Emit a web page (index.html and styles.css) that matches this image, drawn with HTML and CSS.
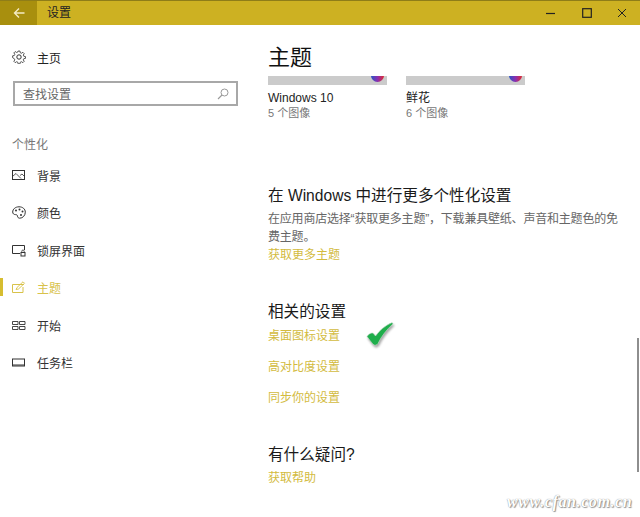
FILE: index.html
```html
<!DOCTYPE html>
<html lang="zh-CN">
<head>
<meta charset="utf-8">
<title>设置</title>
<link rel="stylesheet" href="styles.css">
</head>
<body>
<div class="window">
  <header class="titlebar">
    <div class="back">
      <svg width="12" height="12" viewBox="0 0 12 12"><path d="M6 1.500 1.500 6 6 10.500M1.500 6H11.500" fill="none" stroke="#f4ecc4" stroke-width="1.400"/></svg>
    </div>
    <div class="app-title">设置</div>
    <div class="controls">
      <svg width="10" height="10" viewBox="0 0 10 10"><path d="M0 5.500H9" stroke="#222" stroke-width="1.200"/></svg>
      <svg width="10" height="10" viewBox="0 0 10 10"><rect x=".7" y=".7" width="8.600" height="8.600" fill="none" stroke="#222" stroke-width="1.200"/></svg>
      <svg width="10" height="10" viewBox="0 0 10 10"><path d="M1 1 9 9M9 1 1 9" stroke="#222" stroke-width="1"/></svg>
    </div>
  </header>
  <div class="content">
    <nav class="sidebar">
      <div class="home">
        <svg width="14" height="14" viewBox="0 0 14 14"><circle cx="7" cy="7" r="2.200" fill="none" stroke="#333"/><path d="M6 .8h2l.3 1.800 1.300.6 1.600-1 1.400 1.400-1 1.600.6 1.300 1.800.3v2l-1.800.3-.6 1.300 1 1.600-1.400 1.400-1.600-1-1.300.6-.3 1.800H6l-.3-1.800-1.300-.6-1.600 1-1.400-1.400 1-1.600-.6-1.300L0 8V6l1.800-.3.6-1.300-1-1.600 1.400-1.400 1.600 1 1.300-.6z" fill="none" stroke="#333" stroke-width=".9" transform="translate(.6 .3) scale(.92)"/></svg>
        <span>主页</span>
      </div>
      <div class="search">
        <span>查找设置</span>
        <svg width="12" height="12" viewBox="0 0 12 12"><circle cx="7.500" cy="4.500" r="3.500" fill="none" stroke="#999"/><path d="M5 7 1 11" stroke="#999" stroke-width="1.100"/></svg>
      </div>
      <div class="group">个性化</div>
      <ul class="menu">
        <li class="item">
          <svg width="14" height="12" viewBox="0 0 14 12"><rect x=".5" y="1.500" width="12" height="9" fill="none" stroke="#333"/><path d="M1 7 4 4.500 9 9.500M8 6.500 10 5l2.500 2.500" fill="none" stroke="#333" stroke-width=".8"/></svg>
          <span>背景</span>
        </li>
        <li class="item">
          <svg width="14" height="13" viewBox="0 0 14 13"><path d="M7 .8C3.300.8.700 3.200.700 6c0 1.800 1.300 2.600 2.800 2.600 1.300 0 2 .6 2 1.600 0 1.200 1 2 2.200 2 3 0 5.600-2.700 5.600-6C13.300 3 10.700.8 7 .8z" fill="none" stroke="#333"/><circle cx="4" cy="4.500" r="1" fill="#333"/><circle cx="7.500" cy="3.500" r="1" fill="#333"/><circle cx="10.500" cy="5.500" r="1" fill="#333"/><circle cx="9" cy="9" r="1" fill="#333"/></svg>
          <span>颜色</span>
        </li>
        <li class="item">
          <svg width="14" height="13" viewBox="0 0 14 13"><path d="M8 9.500H.5v-8h12V6" fill="none" stroke="#333"/><rect x="9" y="8.500" width="4" height="3.500" fill="none" stroke="#333"/><path d="M9.800 8.500V7.200a1.200 1.200 0 0 1 2.400 0v1.300" fill="none" stroke="#333" stroke-width=".8"/></svg>
          <span>锁屏界面</span>
        </li>
        <li class="item active">
          <svg width="14" height="13" viewBox="0 0 14 13"><path d="M12 3.500H.5v8h10.500V6" fill="none" stroke="#d8c24a"/><path d="M4 8.500 5 6.500 11 .8l1.500 1.500-6 5.700z" fill="none" stroke="#d8c24a" stroke-width=".9"/></svg>
          <span>主题</span>
        </li>
        <li class="item">
          <svg width="14" height="11" viewBox="0 0 14 11"><path d="M.5 1.500h5.500v3H.5zM.5 6.500h5.500v3H.5zM7.500 1.500H13v3H7.500zM7.500 6.500H13v3H7.500z" fill="none" stroke="#333" stroke-width=".9"/></svg>
          <span>开始</span>
        </li>
        <li class="item">
          <svg width="14" height="10" viewBox="0 0 14 10"><rect x=".5" y="1" width="12" height="7" fill="none" stroke="#333"/><path d="M.5 7h12" stroke="#333"/></svg>
          <span>任务栏</span>
        </li>
      </ul>
    </nav>
    <main class="main">
      <h1 class="page-title">主题</h1>
      <div class="themes">
        <div class="theme">
          <div class="swatch"><i class="dot"></i></div>
          <div class="theme-name">Windows 10</div>
          <div class="theme-count">5 个图像</div>
        </div>
        <div class="theme">
          <div class="swatch"><i class="dot"></i></div>
          <div class="theme-name">鲜花</div>
          <div class="theme-count">6 个图像</div>
        </div>
      </div>
      <section class="more">
        <h2 class="heading">在 Windows 中进行更多个性化设置</h2>
        <p class="desc">在应用商店选择“获取更多主题”，下载兼具壁纸、声音和主题色的免费主题。</p>
        <a class="link">获取更多主题</a>
      </section>
      <section class="related">
        <h2 class="heading">相关的设置</h2>
        <div class="links">
          <a class="link">桌面图标设置</a>
          <a class="link">高对比度设置</a>
          <a class="link">同步你的设置</a>
        </div>
      </section>
      <section class="question">
        <h2 class="heading">有什么疑问?</h2>
        <a class="link">获取帮助</a>
      </section>
    </main>
  </div>
  <svg class="check" width="28" height="25" viewBox="0 0 28 25"><path d="M1 14.500C2.500 12 5 10.500 7 11l2.500 3C13.500 8.500 19 3.500 25.500.8c1.200-.5 1.800.6 1.100 1.400C20.500 8 15.500 14 12 21.500c-.8 1.800-3.500 2.300-5 .8C5 20 3 17 1 14.500z" fill="#1fae4b" stroke="#cfdcd2" stroke-width=".6"/></svg>
  <div class="scrollbar"></div>
  <div class="watermark">www.cfan.com.cn</div>
</div>
</body>
</html>
```

FILE: styles.css
```css
* { box-sizing: border-box; }
html, body { margin: 0; padding: 0; background: #fff; }
body { font-family: "Liberation Sans", "Noto Sans CJK SC", sans-serif; color: #222; }
.window { position: relative; width: 640px; height: 517px; overflow: hidden; background: #fff; }

.titlebar { display: flex; align-items: center; height: 25px; background: #cdb122; border-top: 1px solid #8f7d18; }
.back { display: flex; align-items: center; justify-content: center; width: 37px; height: 100%; background: #a88f0e; }
.app-title { margin-left: 10px; font-size: 12px; line-height: 26px; color: #222; }
.controls { display: flex; margin-left: auto; gap: 25.500px; padding-right: 13px; align-items: center; }
.controls svg { display: block; width: 10px; }

.content { display: flex; height: 492px; }
.sidebar { width: 268px; flex: none; padding-top: 23px; }
.home { display: flex; align-items: center; gap: 11px; padding-left: 12px; height: 18px; font-size: 12px; color: #222; }
.search { display: flex; align-items: center; justify-content: space-between; width: 225px; height: 25px; margin: 15px 0 0 13px; padding: 0 7px 0 8px; border: 2px solid #a8a8a8; font-size: 12px; color: #666; }
.group { margin: 29px 0 0 12px; font-size: 12px; line-height: 20px; color: #777; }
.menu { list-style: none; margin: 1.500px 0 0; padding: 0; }
.item { position: relative; display: flex; align-items: center; height: 37.500px; padding-left: 12px; font-size: 12px; color: #333; }
.item svg { width: 14px; margin-right: 11px; flex: none; }
.item.active { color: #d8c24a; }
.item.active::before { content: ""; position: absolute; left: 0; top: 9px; width: 3px; height: 18px; background: #d6bd30; }

.main { flex: 1; min-width: 0; padding-right: 20px; }
.page-title { margin: 18px 0 0; font-size: 22px; line-height: 30px; font-weight: 400; color: #111; }
.themes { display: flex; gap: 19px; margin-top: 3px; }
.theme { width: 119px; }
.swatch { position: relative; height: 9px; background: #cbcbcb; overflow: hidden; }
.dot { position: absolute; right: 3px; top: -7px; width: 13px; height: 13px; border-radius: 50%; background: linear-gradient(90deg, #2a55c5 0%, #8a2fb0 50%, #e02a30 100%); }
.theme-name { margin-top: 4px; font-size: 12px; line-height: 18px; color: #222; }
.theme-count { font-size: 11px; line-height: 13px; color: #777; }

.heading { margin: 0; font-size: 15.600px; line-height: 24px; font-weight: 400; color: #1a1a1a; }
.more { margin-top: 64px; }
.desc { width: 352px; margin: 2px 0 0; font-size: 12px; line-height: 18px; letter-spacing: -.2px; color: #666; }
.link { display: block; font-size: 12px; line-height: 18px; color: #d3bb3e; }
.related { margin-top: 36px; }
.links { display: flex; flex-direction: column; gap: 13px; margin-top: 3px; }
.question { margin-top: 36px; }
.question .link { margin-top: 2px; }

.check { position: absolute; left: 366px; top: 322px; filter: drop-shadow(1px 2px 1px rgba(60,60,60,.45)); }
.scrollbar { position: absolute; left: 637px; top: 338px; width: 2px; height: 134px; background: #8e8e8e; }
.watermark { position: absolute; left: 507px; top: 492px; font-family: "Liberation Serif", serif; font-style: italic; font-weight: 700; font-size: 16px; line-height: 20px; letter-spacing: .6px; color: #fff; text-shadow: 0 0 1px #777, 1px 1px 1px #999; }
```
